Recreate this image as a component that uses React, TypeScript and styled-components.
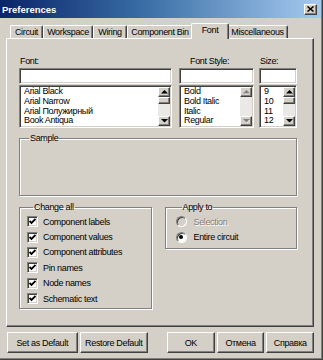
import React from "react";
import styled, { createGlobalStyle, css } from "styled-components";

const GlobalStyle = createGlobalStyle`
  html, body {
    margin: 0;
    padding: 0;
    background: #d4d0c8;
    overflow: hidden;
  }
  * {
    box-sizing: border-box;
  }
`;

const uiFont = css`
  font-family: "Liberation Sans", Arial, sans-serif;
  font-size: 9px;
  letter-spacing: -0.35px;
  color: #000;
`;

const sunken = css`
  border: 1px solid;
  border-color: #808080 #ffffff #ffffff #808080;
  box-shadow: inset 1px 1px #404040, inset -1px -1px #d4d0c8;
`;

const raised = css`
  border: 1px solid;
  border-color: #ffffff #404040 #404040 #ffffff;
  box-shadow: inset -1px -1px #808080;
  background: #d4d0c8;
`;

const Window = styled.div`
  ${uiFont}
  width: 323px;
  height: 360px;
  display: flex;
  flex-direction: column;
  background: #d4d0c8;
  padding: 0 2px 2px 0;
  box-shadow: inset -1px -1px #404040, inset -2px -2px #808080;
`;

const TitleBar = styled.div`
  height: 18px;
  display: flex;
  align-items: center;
  justify-content: space-between;
  padding: 0 4px 0 2px;
  background: linear-gradient(90deg, #0a246a 0%, #3a6ea5 45%, #a6caf0 100%);
`;

const Title = styled.span`
  color: #fff;
  font-weight: bold;
  font-size: 9.5px;
  letter-spacing: 0;
`;

const CloseButton = styled.div`
  ${raised}
  width: 13px;
  height: 11px;
  display: flex;
  align-items: center;
  justify-content: center;
`;

const Body = styled.div`
  display: flex;
  flex-direction: column;
  padding: 5px 7px 0 6px;
`;

const TabStrip = styled.div`
  display: flex;
  align-items: flex-end;
  height: 15px;
  padding-left: 4px;
`;

const Tab = styled.div<{ $w: number; $active?: boolean }>`
  width: ${(p) => p.$w}px;
  height: 13px;
  line-height: 12px;
  text-align: center;
  white-space: nowrap;
  border-top: 1px solid #fff;
  border-left: 1px solid #fff;
  border-right: 1px solid #404040;
  border-radius: 2px 2px 0 0;
  box-shadow: inset -1px 0 #808080;
  background: #d4d0c8;

  ${(p) =>
    p.$active &&
    css`
      position: relative;
      z-index: 1;
      height: 16px;
      line-height: 13px;
      width: ${p.$w + 4}px;
      margin: 0 -2px -1px;
    `}
`;

const Panel = styled.div`
  height: 289px;
  border: 1px solid;
  border-color: #fff #404040 #404040 #fff;
  box-shadow: inset -1px -1px #808080;
  padding: 17px 16px 0 12px;
  display: flex;
  flex-direction: column;
`;

const FieldsRow = styled.div`
  display: flex;
`;

const FieldColumn = styled.div<{ $w: number; $gap?: number }>`
  width: ${(p) => p.$w}px;
  margin-left: ${(p) => p.$gap ?? 0}px;
  display: flex;
  flex-direction: column;
`;

const FieldLabel = styled.div<{ $indent?: number }>`
  line-height: 11px;
  height: 11px;
  padding-left: ${(p) => p.$indent ?? 1}px;
  margin-bottom: 1px;
`;

const TextBox = styled.div`
  ${sunken}
  height: 16px;
  background: #fff;
`;

const ListBox = styled.div`
  ${sunken}
  margin-top: 1px;
  height: 43px;
  background: #fff;
  display: flex;
  padding: 1px;
`;

const ListItems = styled.div`
  flex: 1;
  min-width: 0;
  padding: 0 0 0 3px;
`;

const ListItem = styled.div`
  height: 9.75px;
  line-height: 9.75px;
  white-space: nowrap;
`;

const ScrollBar = styled.div`
  width: 12px;
  flex-shrink: 0;
  display: flex;
  flex-direction: column;
  background: #ebe9e5;
`;

const ScrollButton = styled.div`
  ${raised}
  height: 10px;
  display: flex;
  align-items: center;
  justify-content: center;
`;

const Thumb = styled.div`
  ${raised}
  height: 7px;
`;

const Track = styled.div`
  flex: 1;
`;

const GroupBox = styled.fieldset<{ $h: number; $pl?: number }>`
  margin: 0;
  height: ${(p) => p.$h}px;
  min-width: 0;
  padding: 1px 0 0 ${(p) => p.$pl ?? 7}px;
  border: 1px solid #808080;
  box-shadow: inset 1px 1px #fff, 1px 1px #fff;
`;

const Legend = styled.legend<{ $ml: number }>`
  ${uiFont}
  padding: 0 1px;
  margin-left: ${(p) => p.$ml}px;
  line-height: 11px;
`;

const SampleGroup = styled(GroupBox)`
  margin-top: 5px;
`;

const GroupRow = styled.div`
  margin-top: 6px;
  display: grid;
  grid-template-columns: 1fr 1fr;
  column-gap: 13px;
  align-items: start;
`;

const OptionRow = styled.label<{ $disabled?: boolean }>`
  display: flex;
  align-items: center;
  gap: 5px;
  height: 15.4px;
  color: ${(p) => (p.$disabled ? "#808080" : "#000")};
  text-shadow: ${(p) => (p.$disabled ? "1px 1px #fff" : "none")};
`;

const CheckBox = styled.span`
  ${sunken}
  width: 11px;
  height: 11px;
  background: #fff;
  display: flex;
  align-items: center;
  justify-content: center;
`;

const Radio = styled.span<{ $disabled?: boolean }>`
  width: 11px;
  height: 11px;
  border-radius: 50%;
  border: 1px solid;
  border-color: #808080 #ffffff #ffffff #808080;
  box-shadow: inset 1px 1px #404040;
  background: ${(p) => (p.$disabled ? "#d4d0c8" : "#fff")};
  display: flex;
  align-items: center;
  justify-content: center;
  margin-right: 2px;
`;

const RadioDot = styled.span`
  width: 4px;
  height: 4px;
  border-radius: 50%;
  background: #000;
`;

const ButtonRow = styled.div`
  display: flex;
  margin-top: 5px;
  padding-left: 1px;
`;

const Button = styled.div<{ $w: number; $ml?: number }>`
  ${raised}
  width: ${(p) => p.$w}px;
  margin-left: ${(p) => p.$ml ?? 0}px;
  height: 21px;
  display: flex;
  align-items: center;
  justify-content: center;
  white-space: nowrap;
`;

const Arrow = ({ up, disabled }: { up?: boolean; disabled?: boolean }) => (
  <svg width="7" height="4" viewBox="0 0 7 4">
    {disabled && (
      <polygon
        points={up ? "1,4 4,1 7,4" : "1,1 7,1 4,4"}
        fill="#fff"
      />
    )}
    <polygon
      points={up ? "0,3.5 3.5,0 7,3.5" : "0,0 7,0 3.5,3.5"}
      fill={disabled ? "#808080" : "#000"}
    />
  </svg>
);

const Scroll = ({ thumb, disabled }: { thumb?: boolean; disabled?: boolean }) => (
  <ScrollBar>
    <ScrollButton>
      <Arrow up disabled={disabled} />
    </ScrollButton>
    {thumb && <Thumb />}
    <Track />
    <ScrollButton>
      <Arrow disabled={disabled} />
    </ScrollButton>
  </ScrollBar>
);

const Check = () => (
  <svg width="7" height="7" viewBox="0 0 7 7">
    <polyline
      points="0.5,3 2.5,5 6.5,1"
      fill="none"
      stroke="#000"
      strokeWidth="1.8"
    />
  </svg>
);

const tabs = [
  { name: "Circuit", w: 33 },
  { name: "Workspace", w: 50 },
  { name: "Wiring", w: 34 },
  { name: "Component Bin", w: 66 },
  { name: "Font", w: 34, active: true },
  { name: "Miscellaneous", w: 61 },
];

const fonts = ["Arial Black", "Arial Narrow", "Arial Полужирный", "Book Antiqua"];
const styles = ["Bold", "Bold Italic", "Italic", "Regular"];
const sizes = ["9", "10", "11", "12"];
const changeAll = [
  "Component labels",
  "Component values",
  "Component attributes",
  "Pin names",
  "Node names",
  "Schematic text",
];

export default function App() {
  return (
    <>
      <GlobalStyle />
      <Window>
        <TitleBar>
          <Title>Preferences</Title>
          <CloseButton>
            <svg width="7" height="6" viewBox="0 0 7 6">
              <path d="M0.5 0.5 L6.5 5.5 M6.5 0.5 L0.5 5.5" stroke="#000" strokeWidth="1.5" />
            </svg>
          </CloseButton>
        </TitleBar>
        <Body>
          <TabStrip>
            {tabs.map((t) => (
              <Tab key={t.name} $w={t.w} $active={t.active}>
                {t.name}
              </Tab>
            ))}
          </TabStrip>
          <Panel>
            <FieldsRow>
              <FieldColumn $w={153}>
                <FieldLabel>Font:</FieldLabel>
                <TextBox />
                <ListBox>
                  <ListItems>
                    {fonts.map((f) => (
                      <ListItem key={f}>{f}</ListItem>
                    ))}
                  </ListItems>
                  <Scroll thumb />
                </ListBox>
              </FieldColumn>
              <FieldColumn $w={75} $gap={7}>
                <FieldLabel $indent={11}>Font Style:</FieldLabel>
                <TextBox />
                <ListBox>
                  <ListItems>
                    {styles.map((s) => (
                      <ListItem key={s}>{s}</ListItem>
                    ))}
                  </ListItems>
                  <Scroll disabled />
                </ListBox>
              </FieldColumn>
              <FieldColumn $w={38} $gap={5}>
                <FieldLabel>Size:</FieldLabel>
                <TextBox />
                <ListBox>
                  <ListItems>
                    {sizes.map((s) => (
                      <ListItem key={s}>{s}</ListItem>
                    ))}
                  </ListItems>
                  <Scroll thumb />
                </ListBox>
              </FieldColumn>
            </FieldsRow>

            <SampleGroup $h={63}>
              <Legend $ml={2}>Sample</Legend>
            </SampleGroup>

            <GroupRow>
              <GroupBox $h={107} $pl={7}>
                <Legend $ml={6}>Change all</Legend>
                {changeAll.map((c) => (
                  <OptionRow key={c}>
                    <CheckBox>
                      <Check />
                    </CheckBox>
                    {c}
                  </OptionRow>
                ))}
              </GroupBox>
              <GroupBox $h={47} $pl={10}>
                <Legend $ml={6}>Apply to</Legend>
                <OptionRow $disabled>
                  <Radio $disabled />
                  Selection
                </OptionRow>
                <OptionRow>
                  <Radio>
                    <RadioDot />
                  </Radio>
                  Entire circuit
                </OptionRow>
              </GroupBox>
            </GroupRow>
          </Panel>

          <ButtonRow>
            <Button $w={71}>Set as Default</Button>
            <Button $w={69} $ml={2}>Restore Default</Button>
            <Button $w={48} $ml={19}>OK</Button>
            <Button $w={48} $ml={2}>Отмена</Button>
            <Button $w={48} $ml={2}>Справка</Button>
          </ButtonRow>
        </Body>
      </Window>
    </>
  );
}
